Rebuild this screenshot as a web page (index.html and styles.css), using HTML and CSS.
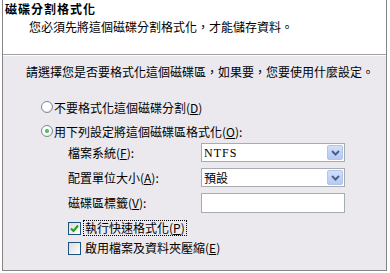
FILE: index.html
```html
<!DOCTYPE html>
<html lang="zh-Hant">
  <head>
    <meta charset="UTF-8" />
    <meta name="viewport" content="width=device-width, initial-scale=1.0" />
    <title>磁碟分割格式化</title>
    <link rel="stylesheet" href="styles.css">
  </head>
  <body>
    <div class="frame">
      <div class="header">
        <div class="title">磁碟分割格式化</div>
        <div class="subtitle">您必須先將這個磁碟分割格式化，才能儲存資料。</div>
      </div>

      <div class="panel">
        <p class="intro">請選擇您是否要格式化這個磁碟區，如果要，您要使用什麼設定。</p>

        <div class="option">
          <span class="radio"></span>
          <span>不要格式化這個磁碟分割(<u>D</u>)</span>
        </div>
        <div class="option">
          <span class="radio checked"></span>
          <span>用下列設定將這個磁碟區格式化(<u>O</u>):</span>
        </div>

        <div class="settings">
          <span class="field-label">檔案系統(<u>F</u>):</span>
          <div class="select">
            <span class="value latin">NTFS</span>
            <span class="drop-btn">
              <svg width="9" height="6" viewBox="0 0 9 6"><path d="M1 1 L4.5 4.5 L8 1" fill="none" stroke="#4d6185" stroke-width="2"/></svg>
            </span>
          </div>

          <span class="field-label">配置單位大小(<u>A</u>):</span>
          <div class="select">
            <span class="value">預設</span>
            <span class="drop-btn">
              <svg width="9" height="6" viewBox="0 0 9 6"><path d="M1 1 L4.5 4.5 L8 1" fill="none" stroke="#4d6185" stroke-width="2"/></svg>
            </span>
          </div>

          <span class="field-label">磁碟區標籤(<u>V</u>):</span>
          <div class="textbox"></div>
        </div>

        <div class="check-row first">
          <span class="checkbox checked">
            <svg width="9" height="9" viewBox="0 0 9 9"><path d="M1 4.5 L3.5 7 L8 1.5" fill="none" stroke="#21a121" stroke-width="2"/></svg>
          </span>
          <span class="focus">執行快速格式化(<u>P</u>)</span>
        </div>
        <div class="check-row">
          <span class="checkbox"></span>
          <span class="plain">啟用檔案及資料夾壓縮(<u>E</u>)</span>
        </div>
      </div>
    </div>
  </body>
</html>
```

FILE: styles.css
```css
body {
  margin: 0;
  background-color: #fff;
  color: #000;
  font-family: "Noto Sans CJK TC", "Noto Sans CJK SC", sans-serif;
  font-size: 12px;
}

.frame {
  box-sizing: border-box;
  height: 271px;
  margin: 0 3px 0 2px;
  border: 1px solid #858585;
  border-top: 0;
  display: flex;
  flex-direction: column;
}

.header {
  box-sizing: border-box;
  height: 55px;
  padding: 0 0 0 2px;
  border-bottom: 1px solid #a0a0a0;
}

.title {
  font-size: 12px;
  font-weight: bold;
  letter-spacing: 1px;
  line-height: 18px;
}

.subtitle {
  line-height: 17px;
  padding-left: 24px;
}

.panel {
  flex: 1;
  background-color: #ebe9ee;
  border-top: 1px solid #fff;
  padding: 9px 0 0 23px;
}

.intro {
  margin: 0 0 16px 0;
  line-height: 14px;
}

.option {
  display: flex;
  align-items: center;
  gap: 1px;
  height: 24px;
  margin-left: 15px;
}

.radio {
  box-sizing: border-box;
  width: 12px;
  height: 12px;
  border: 1px solid #7b8a99;
  border-radius: 50%;
  background: radial-gradient(circle at 40% 40%, #fff 40%, #dcdcdc 100%);
  display: flex;
  align-items: center;
  justify-content: center;
}

.radio.checked::after {
  content: "";
  width: 4px;
  height: 4px;
  border-radius: 50%;
  background: radial-gradient(circle, #5fd35f 0%, #21a121 100%);
}

.settings {
  display: grid;
  grid-template-columns: 133px 144px;
  row-gap: 6px;
  align-items: center;
  margin: 0 0 0 42px;
}

.field-label {
  line-height: 14px;
}

.select,
.textbox {
  box-sizing: border-box;
  height: 19px;
  border: 1px solid #a5acb2;
  background-color: #fff;
}

.select {
  display: flex;
  align-items: center;
  justify-content: space-between;
  padding: 0 1px 0 2px;
}

.textbox {
  height: 20px;
}

.value {
  line-height: 14px;
}

.latin {
  font-family: "Liberation Serif", serif;
  letter-spacing: 1px;
}

.drop-btn {
  box-sizing: border-box;
  width: 16px;
  height: 15px;
  border: 1px solid #b3c4ea;
  border-radius: 2px;
  background: linear-gradient(#d2defc, #b5c9f5);
  display: flex;
  align-items: center;
  justify-content: center;
}

.check-row {
  display: flex;
  align-items: center;
  height: 20px;
  margin-left: 42px;
}

.check-row.first {
  margin-top: 5px;
}

.checkbox {
  box-sizing: border-box;
  width: 13px;
  height: 13px;
  border: 1px solid #1c5180;
  background: linear-gradient(135deg, #dcdcd7, #fff);
  display: flex;
  align-items: center;
  justify-content: center;
  margin-right: 2px;
}

.focus {
  border: 1px dotted #000;
  padding: 0 1px;
  line-height: 14px;
}

.plain {
  padding: 0 2px;
  line-height: 14px;
}
```
